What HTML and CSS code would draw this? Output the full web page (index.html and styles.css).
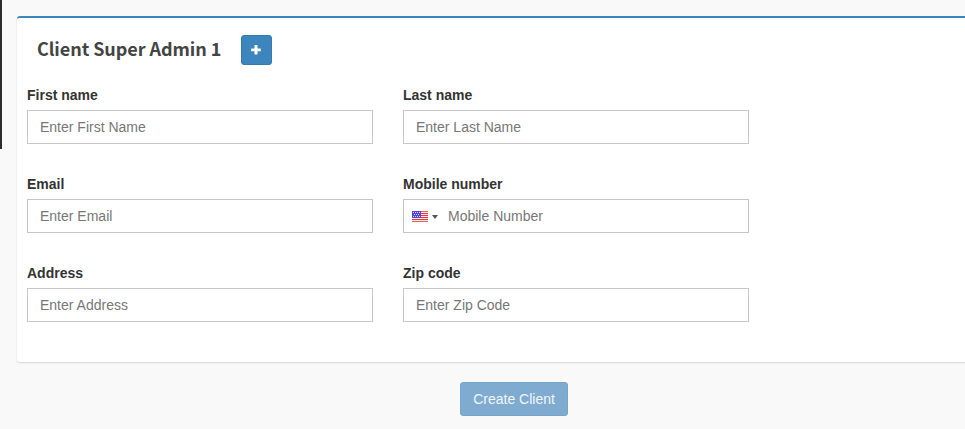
FILE: index.html
```html
<!DOCTYPE html>
<html lang="en">
<head>
<meta charset="utf-8">
<title>Create Client</title>
<link rel="stylesheet" href="styles.css">
</head>
<body>
<aside class="sidebar"></aside>
<main class="content">
  <section class="box">
    <header class="box-header">
      <h3 class="box-title">Client Super Admin 1</h3>
      <button class="btn btn-add" type="button" aria-label="Add">
        <svg width="10" height="10" viewBox="0 0 10 10"><path d="M4 0h2q.5 0 .5.5v3h2.800q.5 0 .5.5v1.700q0 .5-.5.5H6.500v2.900q0 .5-.5.5H4q-.5 0-.5-.5V6.200H.6q-.5 0-.5-.5V4q0-.5.5-.5h2.900V.5q0-.5.5-.5z" fill="#fff"/></svg>
      </button>
    </header>
    <div class="form-grid">
      <div class="field"><label for="first">First name</label><input id="first" class="control" placeholder="Enter First Name"></div>
      <div class="field"><label for="last">Last name</label><input id="last" class="control" placeholder="Enter Last Name"></div>
      <div class="field"><label for="email">Email</label><input id="email" class="control" placeholder="Enter Email"></div>
      <div class="field"><label for="mobile">Mobile number</label>
        <div class="control phone">
          <svg class="flag" width="16" height="11" viewBox="0 0 16 11" shape-rendering="crispEdges">
            <path fill="#fbe9ea" d="M0 0h16v11H0z"/>
            <path fill="#d9674f" d="M0 0h16v1H0zM0 10h16v1H0z"/>
            <path fill="#f0323c" d="M9 2h7v1H9zM9 4h7v1H9zM9 6h7v1H9zM0 8h16v1H0z"/>
            <path fill="#4f46e0" d="M0 0h9v7H0z"/>
            <path fill="#d5d4fa" d="M1 1h1v1H1zM3 1h1v1H3zM5 1h1v1H5zM7 1h1v1H7zM2 3h1v1H2zM4 3h1v1H4zM6 3h1v1H6zM1 5h1v1H1zM3 5h1v1H3zM5 5h1v1H5zM7 5h1v1H7z"/>
          </svg>
          <span class="caret"></span>
          <input id="mobile" class="phone-input" placeholder="Mobile Number">
        </div>
      </div>
      <div class="field"><label for="address">Address</label><input id="address" class="control" placeholder="Enter Address"></div>
      <div class="field"><label for="zip">Zip code</label><input id="zip" class="control" placeholder="Enter Zip Code"></div>
    </div>
  </section>
  <div class="actions"><button class="btn btn-submit" type="button" disabled>Create Client</button></div>
</main>
</body>
</html>
```
FILE: styles.css
```css
* { box-sizing: border-box; }
body {
  margin: 0;
  height: 429px;
  display: flex;
  overflow: hidden;
  background: #f9f9f9;
  color: #333;
  font: 14px/20px "Liberation Sans", Arial, sans-serif;
}
.sidebar { width: 2px; height: 149px; background: #2c2c2e; }
.content { flex: 1; min-width: 0; padding: 16px 0 0 15px; }
.box {
  height: 346px;
  margin-right: -10px;
  background: #fff;
  border-top: 2px solid #3c85bd;
  border-radius: 3px;
  box-shadow: 0 1px 2px rgba(0, 0, 0, .14);
}
.box-header {
  display: flex;
  align-items: center;
  gap: 20px;
  padding: 17px 20px 0;
}
.box-title {
  margin: 0;
  padding-bottom: 4px;
  width: 184px;
  white-space: nowrap;
  color: #444;
  font: 700 18px/26px "Noto Sans CJK SC", sans-serif;
  letter-spacing: -0.06px;
}
.btn {
  display: flex;
  align-items: center;
  justify-content: center;
  padding: 0;
  border: 1px solid #367fa9;
  border-radius: 3px;
  background: #3c85bd;
  color: #fff;
  font: inherit;
}
.btn-add { width: 31px; height: 30px; padding: 0 1px 1px 0; border-color: #357ab0; }
.form-grid {
  display: grid;
  grid-template-columns: 346px 346px;
  column-gap: 30px;
  row-gap: 30px;
  padding: 20px 10px 0;
}
.field { height: 59px; }
.field label {
  display: block;
  margin-bottom: 5px;
  font-weight: 700;
}
.control {
  display: block;
  width: 100%;
  height: 34px;
  padding: 6px 12px;
  border: 1px solid #c8c8c8;
  border-radius: 0;
  background: #fff;
  font: inherit;
}
input::placeholder { color: #777; opacity: 1; }
.phone { display: flex; align-items: center; padding: 0 0 0 8px; }
.flag { margin-top: 1px; }
.caret {
  margin: 2px 10px 0 4px;
  border: 3px solid transparent;
  border-top: 4px solid #555;
  border-bottom: 0;
}
.phone-input { flex: 1; padding: 0; border: 0; font: inherit; }
.actions { padding: 20px 0 0 443px; }
.btn-submit {
  width: 108px;
  height: 34px;
  background: #80abd0;
  border-color: #77a5c9;
  color: #f0f6fb;
}
```
